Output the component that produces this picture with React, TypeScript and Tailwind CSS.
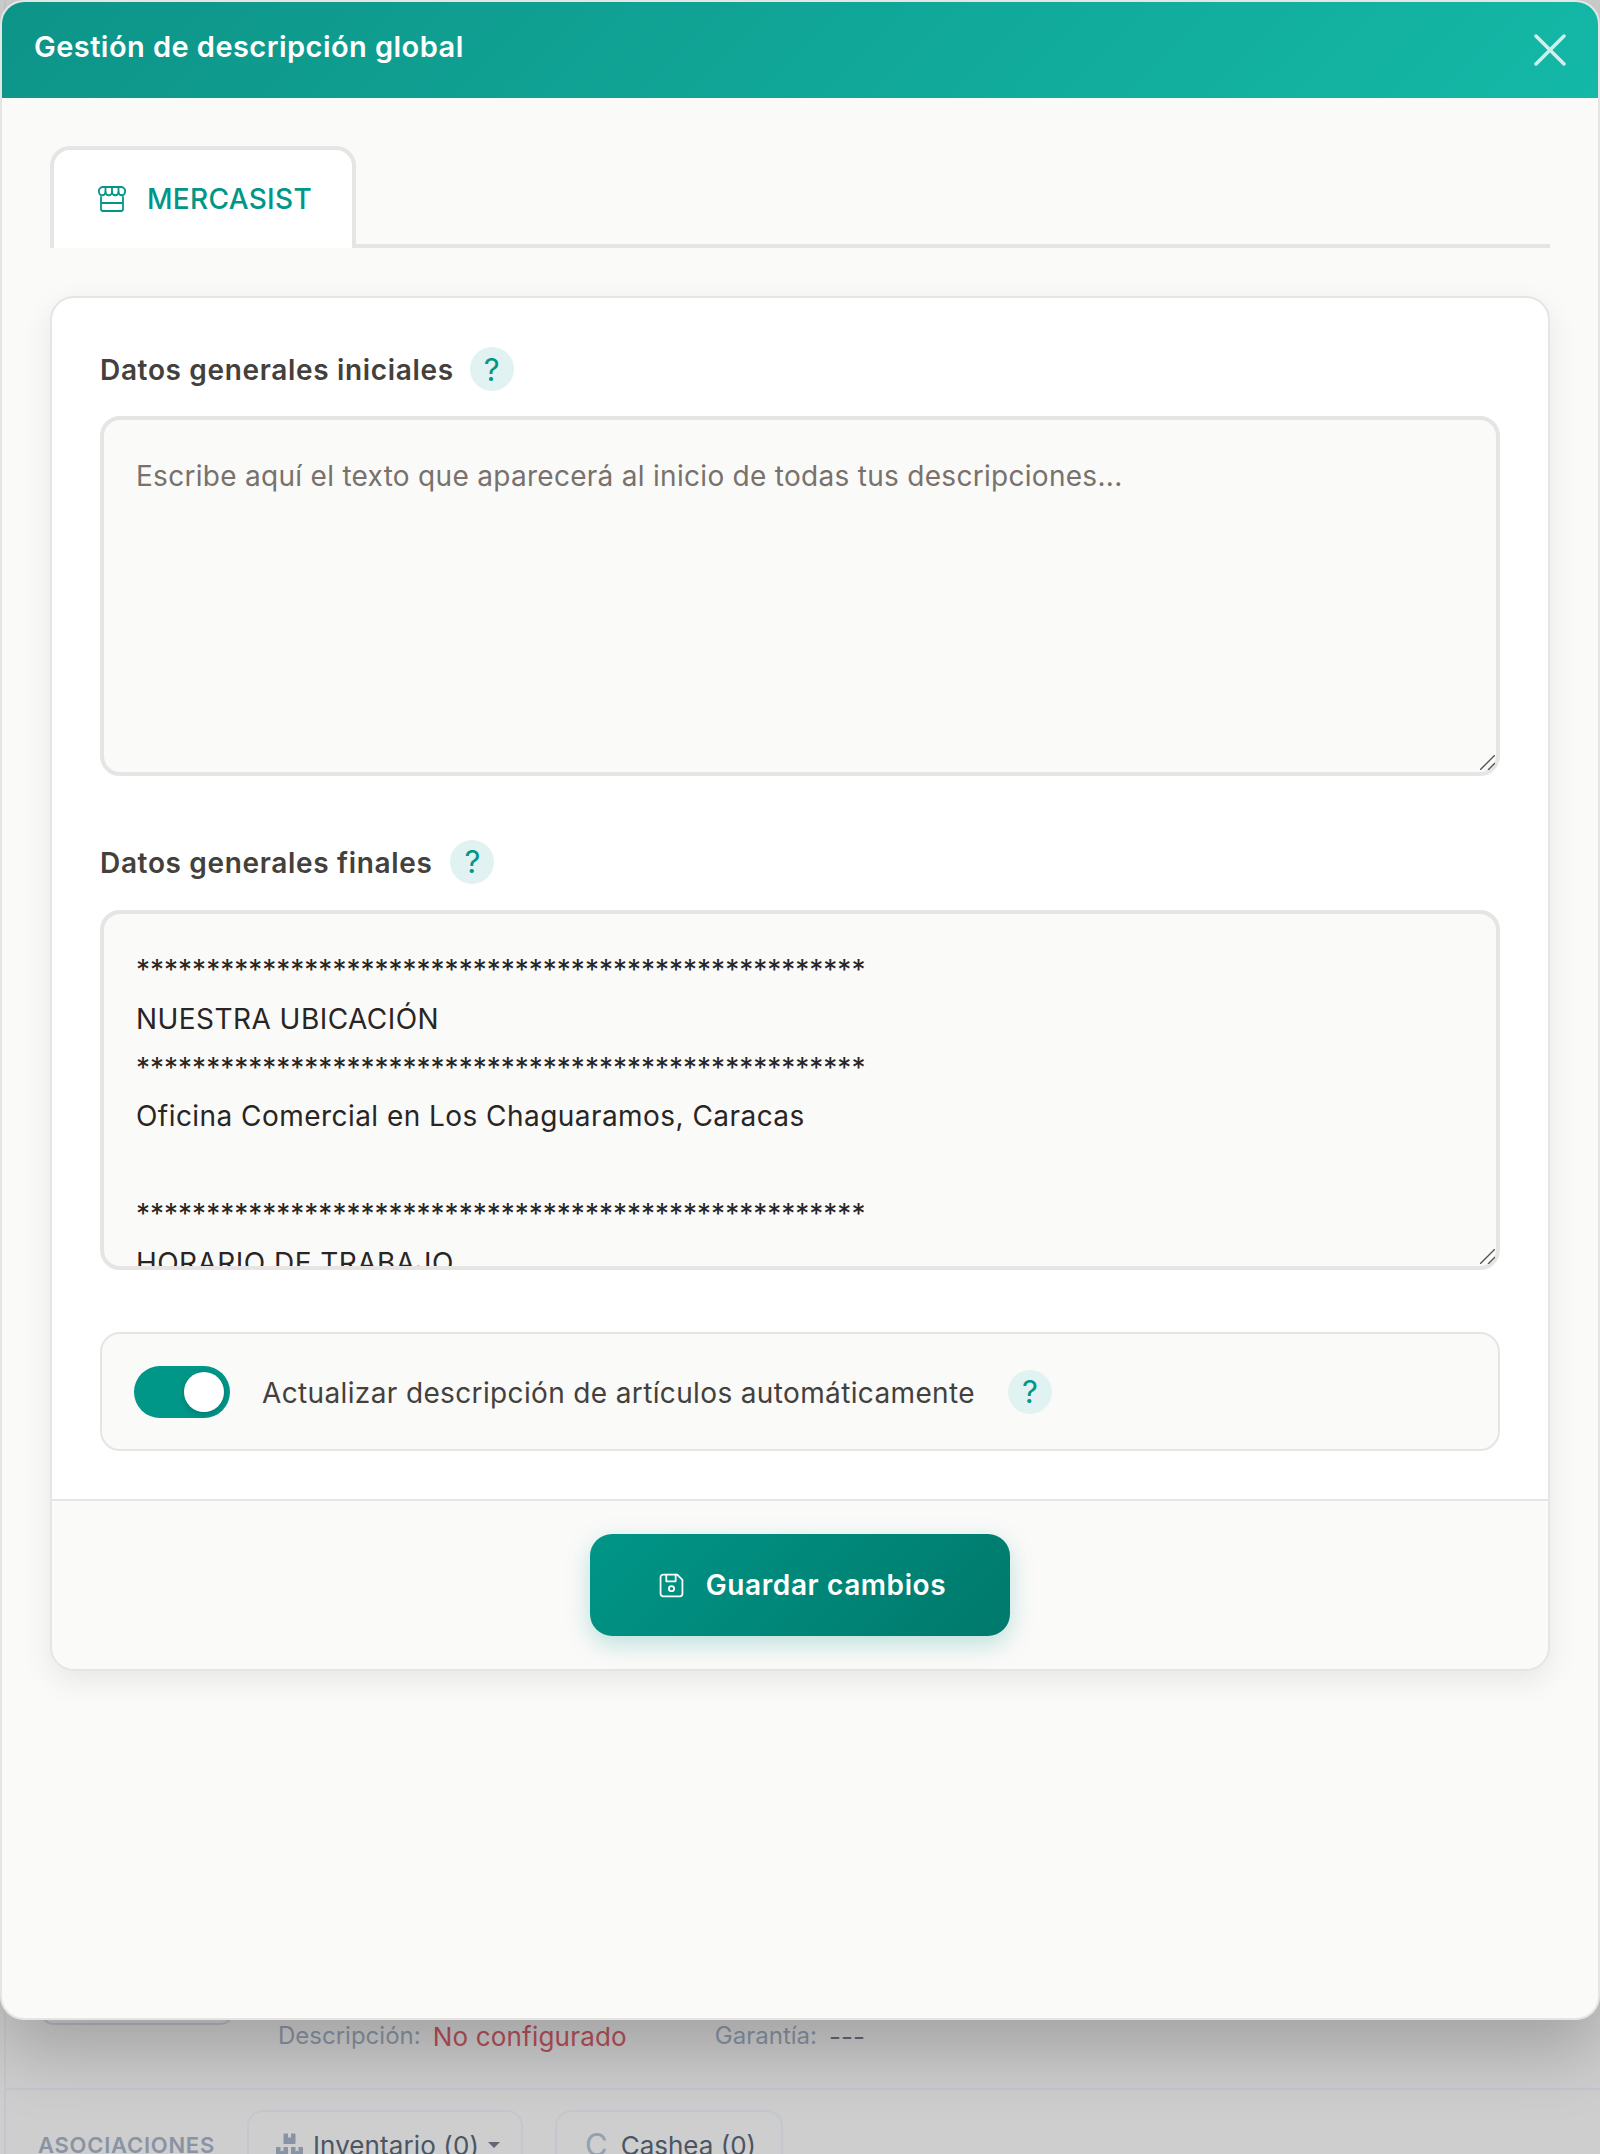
import React, { useState } from "react";
import { FaBoxes } from "react-icons/fa";

const STARS = "*".repeat(52);

const finalLines = [
  STARS,
  "NUESTRA UBICACIÓN",
  STARS,
  "Oficina Comercial en Los Chaguaramos, Caracas",
  "",
  STARS,
  "HORARIO DE TRABAJO",
  STARS,
];

const StoreIcon = () => (
  <svg width="28" height="26" viewBox="0 0 28 26" fill="none" stroke="#009688" strokeWidth="1.8" strokeLinecap="round" strokeLinejoin="round">
    <path d="M1 6a4 4 0 0 1 4-5h18a4 4 0 0 1 4 5a3.25 3.25 0 0 1-6.5 0a3.25 3.25 0 0 1-6.5 0a3.25 3.25 0 0 1-6.5 0a3.25 3.25 0 0 1-6.5 0z" />
    <path d="M7.5 1.5V6M14 1.5V6M20.5 1.5V6" />
    <path d="M3 11v12a2 2 0 0 0 2 2h18a2 2 0 0 0 2-2V11M3 17h22" />
  </svg>
);

const SaveIcon = () => (
  <svg width="25" height="25" viewBox="0 0 24 24" fill="none" stroke="#ffffff" strokeWidth="1.7" strokeLinecap="round" strokeLinejoin="round">
    <path d="M4 1.5h13.5l5 5V20a2.5 2.5 0 0 1-2.5 2.5H4A2.5 2.5 0 0 1 1.5 20V4A2.5 2.5 0 0 1 4 1.5z" />
    <path d="M7 1.5V8h9V1.5" />
    <circle cx="12" cy="15" r="2.5" />
  </svg>
);

const Help = () => (
  <span className="flex h-[44px] w-[44px] shrink-0 items-center justify-center rounded-full bg-[#e0f2f1] text-[31px] leading-none text-[#009688]">
    ?
  </span>
);

const Grip = () => (
  <svg className="absolute bottom-[6px] right-[5px]" width="15" height="15" viewBox="0 0 15 15" fill="none" stroke="#555555" strokeWidth="1.4">
    <path d="M0 15L15 0M8 15l7-7" />
  </svg>
);

const App = () => {
  const [autoUpdate, setAutoUpdate] = useState(true);

  return (
    <div className="relative h-[2154px] overflow-hidden bg-[#cecece] font-[Inter,sans-serif]">
      {/* page behind the dialog */}
      <div className="ml-[4px] h-[2154px] border-l-2 border-[#c4c8ce] pt-[1980px]">
        <div className="flex h-[110px] border-b-2 border-[#c2c7cf] pl-[34px]">
          <div className="h-[45px] w-[194px] rounded-b-[14px] border-2 border-[#b4b8c0]"></div>
          <div className="ml-[44px] mt-[41px] flex h-[30px] items-center text-[24px] text-[#8a93a3]">
            <span>Descripción:</span>
            <span className="ml-[12px] text-[26px] tracking-[0.2px] text-[#b5505c]">No configurado</span>
            <span className="ml-[88px]">Garantía:</span>
            <span className="ml-[12px] text-[26px] text-[#5f6876]">---</span>
          </div>
        </div>
        <div className="flex gap-[32px] pl-[32px] pt-[20px]">
          <span className="self-center text-[22px] font-semibold tracking-[0.75px] text-[#8a93a3]">ASOCIACIONES</span>
          <div className="flex h-[70px] w-[276px] items-center rounded-[16px] border-2 border-[#c3c8cf] pl-[27px] text-[26px] tracking-[0.1px] text-[#4b5563]">
            <FaBoxes className="text-[27px] text-[#8a93a3]" />
            <span className="ml-[10px]">Inventario (0)</span>
            <span className="ml-[9px] h-0 w-0 border-x-[6px] border-t-[6px] border-x-transparent border-t-[#5f6876]"></span>
          </div>
          <div className="flex h-[70px] w-[228px] items-center rounded-[16px] border-2 border-[#c3c8cf] pl-[28px] text-[26px] text-[#4b5563]">
            <span className="text-[31px] text-[#94a0b0]">C</span>
            <span className="ml-[13px]">Cashea (0)</span>
          </div>
        </div>
      </div>

      {/* dialog */}
      <div className="absolute left-0 top-0 h-[2020px] w-[1600px] overflow-hidden rounded-[24px] border-2 border-[#e7e5e4] bg-[#fafaf9] shadow-[0_30px_70px_rgba(0,0,0,0.22)]">
        <div className="flex h-[96px] items-center justify-between bg-[linear-gradient(135deg,#0d9488,#14b8a6)] pl-[32px] pr-[32px]">
          <h2 className="pb-[6px] text-[29px] font-semibold tracking-[0.45px] text-white">Gestión de descripción global</h2>
          <button className="text-white/80">
            <svg width="32" height="32" viewBox="0 0 32 32" fill="none" stroke="currentColor" strokeWidth="3.5" strokeLinecap="round">
              <path d="M2 2l28 28M30 2L2 30" />
            </svg>
          </button>
        </div>

        <div className="px-[48px] pt-[48px]">
          <div className="flex h-[102px] border-b-4 border-[#e7e5e4]">
            <div className="z-10 flex h-[102px] w-[306px] items-center rounded-t-[20px] border-x-4 border-t-4 border-[#e7e5e4] bg-white pl-[44px]">
              <StoreIcon />
              <span className="ml-[21px] text-[28px] font-medium tracking-[0.3px] text-[#009688]">MERCASIST</span>
            </div>
          </div>

          <div className="mt-[48px] overflow-hidden rounded-[24px] border-2 border-[#e7e5e4] bg-white shadow-[0_10px_30px_rgba(0,0,0,0.08)]">
            <div className="px-[48px] pb-[48px] pt-[49px]">
              <div className="mb-[25px] flex items-center gap-[16px]">
                <label className="pt-[2px] text-[28px] font-semibold tracking-[0.66px] text-[#44403c]">Datos generales iniciales</label>
                <Help />
              </div>
              <div className="relative">
                <textarea
                  readOnly
                  placeholder="Escribe aquí el texto que aparecerá al inicio de todas tus descripciones..."
                  className="block h-[360px] w-full resize-none overflow-hidden rounded-[20px] border-4 border-[#e7e5e4] bg-[#fafaf9] px-[32px] py-[32px] text-[28px] leading-[48.75px] text-[#292524] placeholder:tracking-[0.29px] placeholder:text-[#78716c]"
                ></textarea>
                <Grip />
              </div>

              <div className="mb-[26px] mt-[63px] flex items-center gap-[18px]">
                <label className="pt-[3px] text-[28px] font-semibold tracking-[0.66px] text-[#44403c]">Datos generales finales</label>
                <Help />
              </div>
              <div className="relative">
                <div className="h-[360px] overflow-hidden rounded-[20px] border-4 border-[#e7e5e4] bg-[#fafaf9] px-[32px] py-[32px] text-[28px] leading-[48.75px] text-[#292524]">
                  {finalLines.map((line, i) => (
                    <div key={i} className={`h-[48.75px] whitespace-pre ${line === STARS ? "" : "tracking-[0.45px]"}`}>
                      {line}
                    </div>
                  ))}
                </div>
                <Grip />
              </div>

              <div className="mt-[62px] flex h-[119px] items-center rounded-[20px] border-2 border-[#e7e5e4] bg-[#fafaf9] px-[32px]">
                <button
                  onClick={() => setAutoUpdate(!autoUpdate)}
                  className={`flex h-[52px] w-[96px] shrink-0 items-center rounded-full px-[6px] ${autoUpdate ? "justify-end bg-[#009688]" : "justify-start bg-[#d6d3d1]"}`}
                >
                  <span className="h-[40px] w-[40px] rounded-full bg-white shadow-[0_2px_6px_rgba(0,0,0,0.2)]"></span>
                </button>
                <span className="ml-[32px] pt-[2px] text-[28px] tracking-[0.36px] text-[#44403c]">Actualizar descripción de artículos automáticamente</span>
                <span className="ml-[33px]">
                  <Help />
                </span>
              </div>
            </div>

            <div className="flex justify-center border-t-2 border-[#e7e5e4] bg-[#fafaf9] pb-[33px] pt-[33px]">
              <button className="flex h-[102px] w-[420px] items-center justify-center gap-[22px] rounded-[22px] bg-[linear-gradient(135deg,#009688,#00796b)] pl-[5px] text-[28px] font-semibold tracking-[0.6px] text-white shadow-[0_8px_24px_rgba(0,150,136,0.25)]">
                <SaveIcon />
                Guardar cambios
              </button>
            </div>
          </div>
        </div>
      </div>
    </div>
  );
};

export default App;
